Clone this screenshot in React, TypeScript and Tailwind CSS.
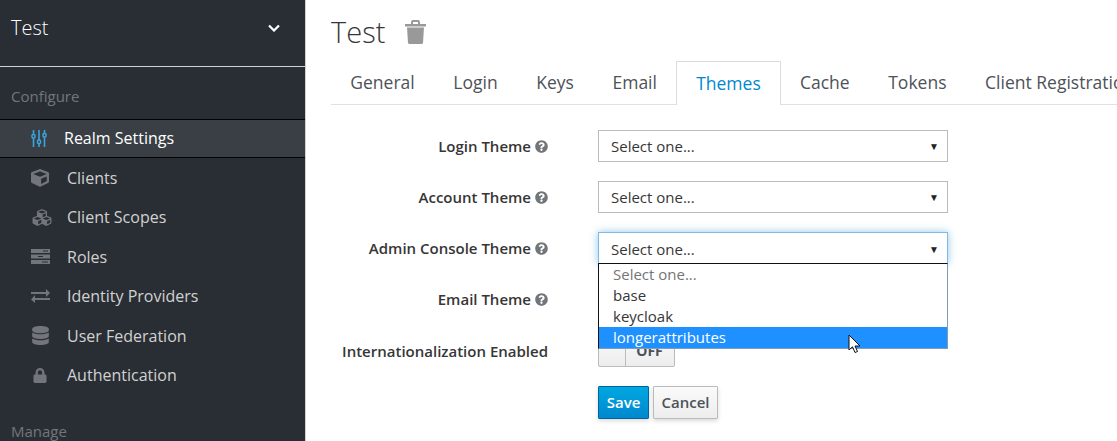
import { FaCube, FaCubes, FaDatabase, FaLock, FaQuestionCircle } from "react-icons/fa";

const navItems = [
  { label: "Clients", icon: <FaCube className="h-[18px] w-[18px]" /> },
  { label: "Client Scopes", icon: <FaCubes className="ml-[3px] h-[19px] w-[24px] shrink-0" /> },
  { label: "Roles", icon: <ServerIcon /> },
  { label: "Identity Providers", icon: <ExchangeIcon /> },
  { label: "User Federation", icon: <FaDatabase className="h-[19px] w-[17px]" /> },
  { label: "Authentication", icon: <FaLock className="h-[15px] w-[14px]" /> },
];

const tabs = ["General", "Login", "Keys", "Email", "Themes", "Cache", "Tokens", "Client Registration"];

function SlidersIcon() {
  return (
    <svg viewBox="0 0 16 17" className="ml-px h-[17px] w-[16px]" fill="none" stroke="currentColor">
      <path d="M2.500 0v17M8 0v17M13.500 0v17" strokeWidth="1.600" />
      <rect x="1" y="4.500" width="3" height="3.500" rx="1" fill="#393f44" strokeWidth="1.500" />
      <rect x="6.500" y="10" width="3" height="3.500" rx="1" fill="#393f44" strokeWidth="1.500" />
      <rect x="12" y="3.500" width="3" height="3.500" rx="1" fill="#393f44" strokeWidth="1.500" />
    </svg>
  );
}

function ServerIcon() {
  return (
    <svg viewBox="0 0 19 15" className="h-[15px] w-[19px] shrink-0" fill="currentColor">
      <path fillRule="evenodd" d="M0 0h19v4H0zM12 1.500v1h5v-1zM0 5.500h19v4H0zM7 7v1h5V7zM0 11h19v4H0zM11 12.500v1h6v-1z" />
    </svg>
  );
}

function ExchangeIcon() {
  return (
    <svg viewBox="0 0 19 14" className="h-[14px] w-[19px] shrink-0" fill="currentColor">
      <path d="M0 3h15V0l4 4-4 4V5H0zM19 9H4V6l-4 4.500L4 14v-3h15z" />
    </svg>
  );
}

function TrashIcon() {
  return (
    <svg viewBox="0 0 21 24" className="ml-[20px] mt-[10px] h-[24px] w-[21px]" fill="#999">
      <path fillRule="evenodd" d="M6 4V2l1-2h7l1 2v2h6v2.500H0V4zM8 2v2h5V2z" />
      <path d="M2 7.500h17L18 23l-1 1H4l-1-1z" />
    </svg>
  );
}

function CursorIcon() {
  return (
    <svg viewBox="0 0 14 20" className="h-5 w-[14px]">
      <path d="M1 1v15l3.500-3.200L7 18.500l2.500-1L7 12h5z" fill="#fff" stroke="#111" strokeWidth="1" />
    </svg>
  );
}

function Label({ text }: { text: string }) {
  return (
    <div className="flex items-center justify-end gap-[4px] whitespace-nowrap text-[15px] font-semibold text-[#363636]">
      <span>{text}</span>
      <FaQuestionCircle className="h-[13px] w-[13px] text-[#72767b]" />
    </div>
  );
}

function SelectBox({ focused = false }: { focused?: boolean }) {
  return (
    <div
      className={`flex h-[32px] w-[350px] items-center justify-between border pl-[12px] pr-[8px] text-[15px] text-[#363636] ${
        focused ? "border-[#7dbbe6] pt-[2px] shadow-[0_0_8px_rgba(0,136,206,0.45)]" : "border-[#bbbbbb]"
      }`}
    >
      <span>Select one...</span>
      <span className="text-[10px] text-[#222]">▼</span>
    </div>
  );
}

function ThemeRow({ label, focused }: { label: string; focused?: boolean }) {
  return (
    <div className="flex items-center">
      <div className="w-[267px] pr-[50px]">
        <Label text={label} />
      </div>
      <SelectBox focused={focused} />
    </div>
  );
}

export default function App() {
  return (
    <div className="flex h-[441px] w-[1117px] overflow-hidden bg-white font-['Open_Sans',sans-serif]">
      <aside className="flex h-full w-[306px] shrink-0 flex-col border-r border-[#d1d1d1] bg-[#292e34] text-[#d1d1d1]">
        <div className="flex h-[67px] shrink-0 items-start justify-between border-b border-[#d1d1d1] pl-[11px] pr-[25px] pt-[13px] text-[20px] font-light text-white">
          <span className="leading-[29px]">Test</span>
          <svg viewBox="0 0 12 8" className="mt-[11px] h-[8px] w-[12px]" fill="none" stroke="currentColor" strokeWidth="2.200">
            <path d="M1 1.500l5 5 5-5" />
          </svg>
        </div>
        <div className="ml-[11px] mt-[20px] text-[15px] leading-[19px] text-[#72767b]">Configure</div>
        <div className="mt-[13px] flex h-[39px] shrink-0 items-center border-y border-[#030303] bg-[#393f44] pl-[30px] text-white">
          <span className="flex w-[34px] text-[#39a5dc]">
            <SlidersIcon />
          </span>
          <span className="pb-[1px] text-[16px] font-medium">Realm Settings</span>
        </div>
        <nav className="flex flex-col pt-[0.400px]">
          {navItems.map((item) => (
            <div key={item.label} className="flex h-[39.400px] items-center pl-[30px] text-[16px]">
              <span className="flex w-[37px] justify-center pr-[17px] text-[#72767b]">{item.icon}</span>
              <span>{item.label}</span>
            </div>
          ))}
        </nav>
        <div className="ml-[11px] mt-[27.600px] text-[15px] leading-[19px] text-[#72767b]">Manage</div>
      </aside>

      <main className="relative min-w-0 flex-1 pl-[25px]">
        <div className="flex h-[61px] items-start pt-[10px]">
          <h1 className="text-[29px] font-light leading-[44px] text-[#363636]">Test</h1>
          <TrashIcon />
        </div>
        <div className="flex h-[44px] w-[900px] border-b border-[#e1e1e1] text-[17.500px] text-[#4d5258]">
          {tabs.map((tab) =>
            tab === "Themes" ? (
              <div key={tab} className="-mb-px flex h-[44px] items-center border-x border-t border-[#dcdcdc] bg-white px-[18.900px] text-[#0088ce]">
                {tab}
              </div>
            ) : (
              <div key={tab} className="flex h-[43px] items-center whitespace-nowrap px-[19.300px]">
                {tab}
              </div>
            ),
          )}
        </div>

        <div className="mt-[25px] flex flex-col gap-[19px]">
          <ThemeRow label="Login Theme" />
          <ThemeRow label="Account Theme" />
          <ThemeRow label="Admin Console Theme" focused />
          <ThemeRow label="Email Theme" />
          <div className="flex h-[33px] items-center">
            <div className="flex w-[267px] justify-end whitespace-nowrap pr-[50px] pt-[2px] text-[15px] font-semibold text-[#363636]">
              Internationalization Enabled
            </div>
            <div className="flex h-[33px] w-[77px] rounded-[2px] border border-[#bbb] bg-gradient-to-b from-[#fafafa] to-[#ededed] text-[14px] font-bold text-[#4d5258]">
              <span className="w-[27px] border-r border-[#bbb]" />
              <span className="flex flex-1 items-center justify-center pr-[1px]">OFF</span>
            </div>
          </div>
          <div className="ml-[267px] flex gap-[4px]">
            <button className="h-[33px] w-[51px] rounded-[1px] border border-[#00659c] bg-gradient-to-b from-[#00a8e1] to-[#0088ce] text-[15px] font-semibold text-white shadow-[0_2px_4px_rgba(0,0,0,0.15)]">
              Save
            </button>
            <button className="h-[33px] w-[65px] rounded-[1px] border border-[#bbb] bg-gradient-to-b from-[#fafafa] to-[#ededed] text-[15px] font-semibold text-[#4d5258] shadow-[0_2px_4px_rgba(0,0,0,0.15)]">
              Cancel
            </button>
          </div>
        </div>

        {/* open native dropdown of the focused select */}
        <div className="absolute left-[292px] top-[263px] w-[350px] border border-[#7f9db9] border-l-[#111] border-t-[#111] bg-white text-[15px] leading-[21px] text-[#363636]">
          <div className="pl-[14px] text-[#757575]">Select one...</div>
          <div className="pl-[14px]">base</div>
          <div className="pl-[14px]">keycloak</div>
          <div className="bg-[#1e90ff] pl-[14px] text-white">longerattributes</div>
        </div>
        <div className="absolute left-[542px] top-[334px]">
          <CursorIcon />
        </div>
      </main>
    </div>
  );
}
